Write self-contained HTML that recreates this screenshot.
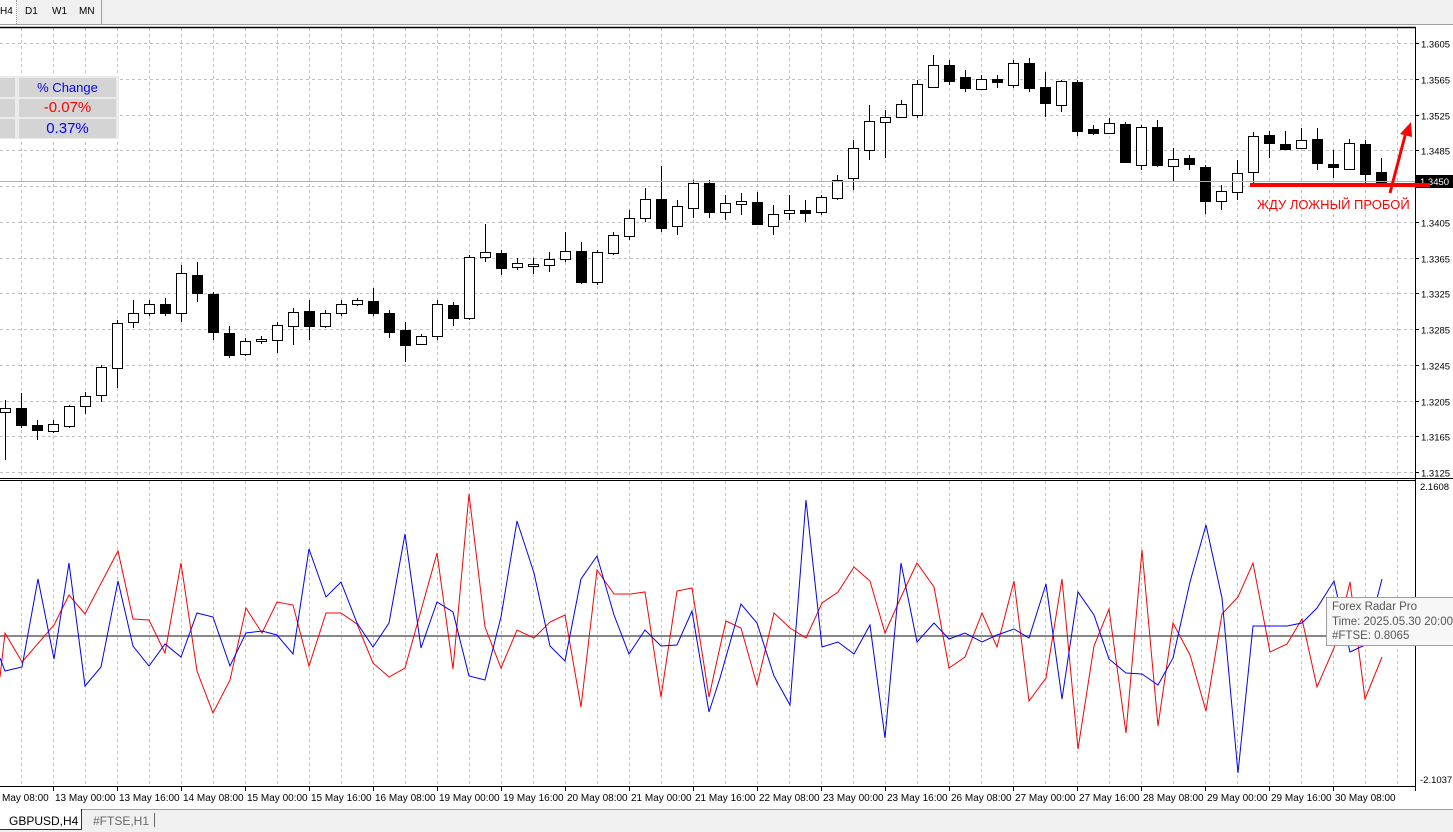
<!DOCTYPE html>
<html><head><meta charset="utf-8">
<style>
body{margin:0;width:1453px;height:831px;overflow:hidden;background:#fff;font-family:"Liberation Sans",sans-serif;position:relative}
.tb{position:absolute;left:0;top:0;width:1453px;height:24px;background:#f0f0f0;border-bottom:1px solid #a0a0a0}
.tb span{position:absolute;top:6px;font-size:10px;color:#000}
.tabs{position:absolute;left:0;top:809px;width:1453px;height:22px;background:#f0f0f0;border-top:1px solid #a0a0a0}
.tab{position:absolute;font-size:12px;top:4px}
.tip{position:absolute;left:1326px;top:597px;width:130px;height:49px;background:#f7f7f7;border:1px solid #a0a0a0;font-size:11.5px;color:#555;line-height:14.5px;padding:2px 0 0 5px;box-sizing:border-box}
.tbl{position:absolute;left:0;top:76px;width:119px;height:63px;background:#ebebeb}
.c{position:absolute;background:#d4d4d4;text-align:center}
</style></head><body>
<div class="tb">
<div style="position:absolute;left:0;top:0;width:16px;height:24px;background:#fafafa;border-right:1px dotted #999"></div>
<span style="left:0">H4</span><span style="left:25px">D1</span><span style="left:52px">W1</span><span style="left:79px">MN</span>
<div style="position:absolute;left:101px;top:0;width:1px;height:24px;background:#a0a0a0"></div>
</div>
<svg id="s" width="1453" height="831" style="position:absolute;left:0;top:0"></svg>
<div class="tbl">
<div class="c" style="left:0;top:2px;width:15px;height:19px"></div>
<div class="c" style="left:0;top:23px;width:15px;height:18px"></div>
<div class="c" style="left:0;top:43px;width:15px;height:19px"></div>
<div class="c" style="left:19px;top:2px;width:97px;height:19px;color:#00f;font-size:13px;line-height:20px">% Change</div>
<div class="c" style="left:19px;top:23px;width:97px;height:18px;color:#f00;font-size:15px;line-height:18px">-0.07%</div>
<div class="c" style="left:19px;top:43px;width:97px;height:19px;color:#00f;font-size:15px;line-height:19px">0.37%</div>
</div>
<div class="tip">Forex Radar Pro<br>Time: 2025.05.30 20:00<br>#FTSE: 0.8065</div>
<div class="tabs">
<div style="position:absolute;left:0;top:-1px;width:81px;height:20px;background:#fff;border-right:1px solid #333;border-bottom:1px solid #333"></div>
<span class="tab" style="left:9px">GBPUSD,H4</span>
<span class="tab" style="left:93px;color:#666">#FTSE,H1</span>
<div style="position:absolute;left:154px;top:3px;width:1px;height:14px;background:#666"></div>
</div>
<script>
var s=document.getElementById('s'),h='';
function L(x1,y1,x2,y2,c,w,d){h+='<line x1="'+x1+'" y1="'+y1+'" x2="'+x2+'" y2="'+y2+'" stroke="'+c+'" stroke-width="'+(w||1)+'"'+(d?' stroke-dasharray="'+d+'"':'')+'/>';}
function T(x,y,t,sz,c,a){h+='<text x="'+x+'" y="'+y+'" font-size="'+sz+'" fill="'+(c||'#000')+'"'+(a?' text-anchor="'+a+'"':'')+' font-family="Liberation Sans,sans-serif">'+t+'</text>';}
// grid
for(var x=21;x<1415;x+=32){L(x+.5,28,x+.5,478,'#c0c0c0',1,'3,3');L(x+.5,481,x+.5,786,'#c0c0c0',1,'3,3');}
var pl=['1.3605','1.3565','1.3525','1.3485','1.3445','1.3405','1.3365','1.3325','1.3285','1.3245','1.3205','1.3165','1.3125'];
for(var i=0;i<13;i++){var y=Math.round(43+i*35.75)+.5;L(0,y,1415,y,'#c0c0c0',1,'3,3');L(1415,y,1419,y,'#000');if(i!=4)T(1421,y+4,pl[i],9.5);}
// frames
L(0,27.5,1416,27.5,'#000',1.5);L(1415.5,27,1415.5,787,'#000');L(0,478.5,1453,478.5,'#000');L(0,480.5,1416,480.5,'#000');L(0,786.5,1416,786.5,'#000');
// candles
var C=[[400,460,408,412,1],[393,428,408,425,0],[420,440,425,430,0],[420,433,424,431,1],[405,428,406,426,1],[392,414,396,406,1],[365,402,367,395,1],[320,388,323,368,1],[300,328,313,322,1],[300,316,304,313,1],[298,316,304,313,0],[265,322,273,313,1],[262,302,275,293,0],[292,340,294,332,0],[326,358,333,355,0],[338,356,341,354,1],[336,344,339,341,1],[322,353,325,340,1],[308,345,312,326,1],[300,340,311,326,0],[310,328,313,326,1],[300,316,304,313,1],[298,306,300,304,1],[288,316,301,313,0],[310,338,313,332,0],[322,362,330,345,0],[334,345,336,344,1],[300,340,304,336,1],[302,326,305,318,0],[255,320,257,318,1],[224,262,252,257,1],[250,275,253,268,0],[258,270,263,267,1],[258,274,264,266,1],[252,272,259,265,1],[232,262,251,259,1],[242,284,251,282,0],[250,285,252,282,1],[232,255,235,253,1],[210,240,218,236,1],[188,222,199,218,1],[166,232,199,228,0],[200,235,206,226,1],[180,218,183,208,1],[180,218,183,212,0],[195,220,203,212,1],[193,215,201,204,1],[192,225,202,224,0],[205,235,214,226,1],[195,220,210,213,1],[200,222,210,213,0],[195,215,197,212,1],[175,200,180,198,1],[140,190,148,178,1],[105,160,121,150,1],[110,158,117,122,1],[100,118,104,117,1],[80,118,84,115,1],[55,88,65,87,1],[60,85,65,81,0],[70,92,77,88,0],[75,90,79,89,1],[75,88,79,82,0],[60,88,63,85,1],[58,92,63,88,0],[72,117,87,103,0],[80,112,81,105,1],[80,136,82,131,0],[125,135,129,133,0],[118,134,123,133,1],[122,162,124,162,0],[125,170,127,165,1],[120,167,127,165,0],[148,182,159,166,1],[155,170,158,164,0],[165,214,167,201,0],[185,210,191,201,1],[160,200,173,192,1],[132,183,136,172,1],[131,158,135,143,0],[131,150,144,149,0],[128,145,140,148,1],[128,170,139,163,0],[150,178,164,167,0],[139,170,143,169,1],[140,185,144,174,0],[158,183,172,182,0]];
for(var i=0;i<C.length;i++){var c=C[i],x=5+16*i;L(x+.5,c[0],x+.5,c[1],'#000');h+='<rect x="'+(x-4.5)+'" y="'+(c[2]+.5)+'" width="10" height="'+Math.max(1,c[3]-c[2])+'" fill="'+(c[4]?'#fff':'#000')+'" stroke="#000"/>';}
L(0,181.5,1415,181.5,'#b0b0b0');
h+='<rect x="1416" y="175" width="37" height="13" fill="#000"/>';T(1420,185,'1.3450',9.5,'#fff');
L(1250,185,1430,185,'#f00',4);
L(1390,193,1406,132,'#f00',3);h+='<polygon points="1411,122 1400,134 1412,137" fill="#f00"/>';
T(1257,209,'ЖДУ ЛОЖНЫЙ ПРОБОЙ',13,'#f00');
// indicator
L(0,636,1415,636,'#888',2);
var R=[[0,677],[5,633],[22,662],[54,625],[69,595],[85,614],[118,551],[133,619],[149,620],[165,653],[181,563],[197,671],[213,713],[230,680],[246,608],[262,633],[277,602],[293,605],[309,666],[326,613],[341,613],[357,624],[373,663],[389,677],[405,668],[437,553],[453,669],[469,494],[485,627],[501,668],[517,630],[534,638],[550,622],[565,615],[581,707],[597,570],[614,594],[631,594],[645,592],[661,697],[677,591],[692,588],[709,697],[720,647],[726,621],[741,628],[757,685],[774,613],[790,628],[806,638],[822,603],[838,592],[854,567],[870,581],[885,633],[901,597],[917,563],[934,587],[949,668],[965,657],[982,613],[997,647],[1014,581],[1029,701],[1046,678],[1062,579],[1078,749],[1094,646],[1109,609],[1126,733],[1142,550],[1158,726],[1173,623],[1190,655],[1206,711],[1222,614],[1238,597],[1253,563],[1270,652],[1287,644],[1302,619],[1317,687],[1334,648],[1350,582],[1365,699],[1382,657]];
var B=[[0,658],[5,671],[22,667],[38,579],[54,659],[69,563],[85,686],[101,667],[118,581],[133,646],[149,666],[165,644],[181,657],[197,613],[213,617],[230,666],[246,633],[262,631],[277,635],[293,654],[309,549],[326,597],[341,582],[357,623],[373,647],[389,623],[405,534],[421,648],[437,602],[453,612],[469,676],[485,680],[501,617],[517,521],[534,573],[550,646],[565,661],[581,579],[597,556],[614,615],[629,654],[645,630],[661,646],[677,645],[692,611],[709,712],[720,678],[741,604],[757,623],[774,676],[790,705],[806,500],[822,647],[838,642],[854,654],[870,625],[885,738],[901,563],[917,642],[934,623],[949,639],[965,633],[982,642],[997,635],[1014,629],[1029,638],[1046,584],[1062,699],[1078,592],[1094,615],[1109,659],[1126,673],[1142,674],[1158,685],[1173,658],[1190,582],[1206,525],[1222,598],[1238,773],[1253,626],[1287,626],[1302,623],[1317,608],[1334,581],[1350,652],[1365,645],[1382,579]];
function P(a,c){h+='<polyline fill="none" stroke="'+c+'" stroke-width="1" points="'+a.map(function(p){return p.join(',')}).join(' ')+'"/>';}
P(R,'#f00');P(B,'#00f');
T(1420,490,'2.1608',9.5);T(1420,783,'-2.1037',9.5);
// time axis
var tl=['13 May 00:00','13 May 16:00','14 May 08:00','15 May 00:00','15 May 16:00','16 May 08:00','19 May 00:00','19 May 16:00','20 May 08:00','21 May 00:00','21 May 16:00','22 May 08:00','23 May 00:00','23 May 16:00','26 May 08:00','27 May 00:00','27 May 16:00','28 May 08:00','29 May 00:00','29 May 16:00','30 May 08:00'];
T(2,801,'May 08:00',10);
for(var i=0;i<tl.length;i++){var x=53+64*i;L(x+.5,787,x+.5,791,'#000');T(x+2,801,tl[i],10);}
L(1415.5,787,1415.5,791,'#000');
s.innerHTML=h;
</script>
</body></html>
